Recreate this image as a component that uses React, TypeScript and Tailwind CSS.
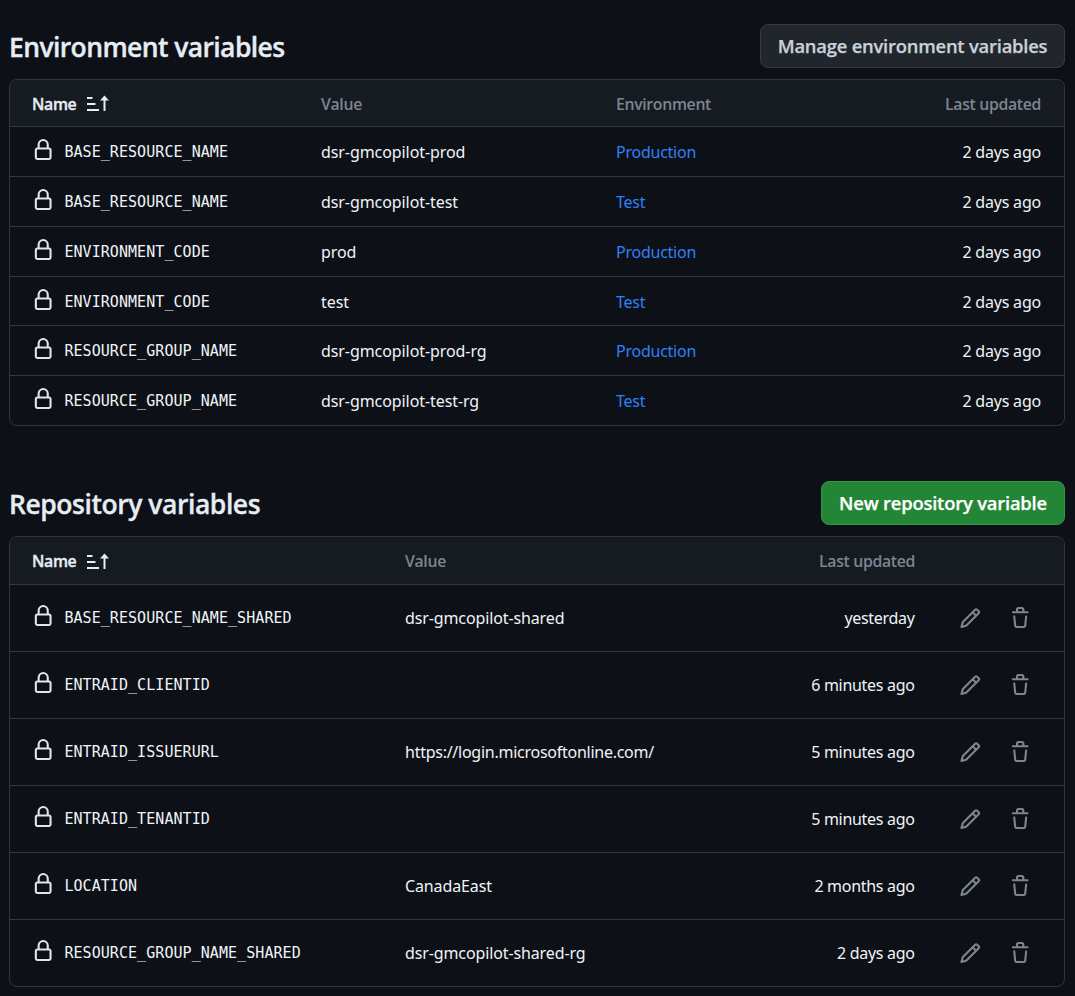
import { type ReactNode } from "react";

type EnvironmentVariable = { name: string; value: string; environment: string; height: string };
type RepositoryVariable = { name: string; value: string; updated: string; height: string };

const environmentVariables: EnvironmentVariable[] = [
  { name: "BASE_RESOURCE_NAME", value: "dsr-gmcopilot-prod", environment: "Production", height: "h-[50px]" },
  { name: "BASE_RESOURCE_NAME", value: "dsr-gmcopilot-test", environment: "Test", height: "h-[50px]" },
  { name: "ENVIRONMENT_CODE", value: "prod", environment: "Production", height: "h-[50px]" },
  { name: "ENVIRONMENT_CODE", value: "test", environment: "Test", height: "h-[49px] pt-px" },
  { name: "RESOURCE_GROUP_NAME", value: "dsr-gmcopilot-prod-rg", environment: "Production", height: "h-[50px]" },
  { name: "RESOURCE_GROUP_NAME", value: "dsr-gmcopilot-test-rg", environment: "Test", height: "h-[49px]" },
];

const repositoryVariables: RepositoryVariable[] = [
  { name: "BASE_RESOURCE_NAME_SHARED", value: "dsr-gmcopilot-shared", updated: "yesterday", height: "h-[67px]" },
  { name: "ENTRAID_CLIENTID", value: "", updated: "6 minutes ago", height: "h-[67px]" },
  { name: "ENTRAID_ISSUERURL", value: "https://login.microsoftonline.com/", updated: "5 minutes ago", height: "h-[67px]" },
  { name: "ENTRAID_TENANTID", value: "", updated: "5 minutes ago", height: "h-[67px]" },
  { name: "LOCATION", value: "CanadaEast", updated: "2 months ago", height: "h-[67px]" },
  { name: "RESOURCE_GROUP_NAME_SHARED", value: "dsr-gmcopilot-shared-rg", updated: "2 days ago", height: "h-[66px]" },
];

function Glyph({ d, className }: { d: string; className: string }) {
  return (
    <svg viewBox="0 0 16 16" fill="currentColor" aria-hidden="true" className={`h-[22.4px] w-[22.4px] shrink-0 ${className}`}>
      <path d={d} />
    </svg>
  );
}

const LOCK =
  "M4 4a4 4 0 0 1 8 0v2h.25c.966 0 1.75.784 1.75 1.75v5.5A1.75 1.75 0 0 1 12.25 15h-8.5A1.75 1.75 0 0 1 2 13.25v-5.5C2 6.784 2.784 6 3.75 6H4Zm8.25 3.5h-8.5a.25.25 0 0 0-.25.25v5.5c0 .138.112.25.25.25h8.5a.25.25 0 0 0 .25-.25v-5.5a.25.25 0 0 0-.25-.25ZM10.5 6V4a2.5 2.5 0 1 0-5 0v2Z";
const PENCIL =
  "M11.013 1.427a1.75 1.75 0 0 1 2.474 0l1.086 1.086a1.75 1.75 0 0 1 0 2.474l-8.61 8.61c-.21.21-.47.364-.756.445l-3.251.93a.75.75 0 0 1-.927-.928l.929-3.25c.081-.286.235-.547.445-.758l8.61-8.61Zm.176 4.823L9.75 4.81l-6.286 6.287a.253.253 0 0 0-.064.108l-.558 1.953 1.953-.558a.253.253 0 0 0 .108-.064Zm1.238-3.763a.25.25 0 0 0-.354 0L10.811 3.75l1.439 1.44 1.263-1.263a.25.25 0 0 0 0-.354Z";
const TRASH =
  "M11 1.75V3h2.25a.75.75 0 0 1 0 1.5H2.75a.75.75 0 0 1 0-1.5H5V1.75C5 .784 5.784 0 6.75 0h2.5C10.216 0 11 .784 11 1.75ZM4.496 6.675l.66 6.6a.25.25 0 0 0 .249.225h5.19a.25.25 0 0 0 .249-.225l.66-6.6a.75.75 0 0 1 1.492.149l-.66 6.6A1.748 1.748 0 0 1 10.595 15h-5.19a1.75 1.75 0 0 1-1.741-1.575l-.66-6.6a.75.75 0 1 1 1.492-.15ZM6.5 1.75V3h3V1.75a.25.25 0 0 0-.25-.25h-2.5a.25.25 0 0 0-.25.25Z";

function SortIcon() {
  return (
    <svg viewBox="0 0 24 18" fill="none" stroke="currentColor" strokeWidth="2" aria-hidden="true" className="mb-[3px] h-[18px] w-6">
      <path d="M1 4h5.5M1 10h8.5M1 16h12" />
      <path d="M18.5 17V4" />
      <path d="M18.5 1.5 23 6.6h-9Z" fill="currentColor" stroke="none" />
    </svg>
  );
}

function SectionTitle({ title, tracking, children }: { title: string; tracking: string; children: ReactNode }) {
  return (
    <div className="flex h-11 items-center justify-between">
      <h2
        className={`pt-px font-['Open_Sans',sans-serif] text-[26.5px] leading-9 font-semibold text-[#e6edf3] [-webkit-text-stroke:0.35px_currentColor] ${tracking}`}
      >
        {title}
      </h2>
      {children}
    </div>
  );
}

function NameHeader({ width }: { width: string }) {
  return (
    <div className={`flex items-center text-[#e6edf3] ${width}`}>
      <span className="w-[54px] [-webkit-text-stroke:0.35px_currentColor]">Name</span>
      <SortIcon />
    </div>
  );
}

function NameCell({ name, width, offset }: { name: string; width: string; offset: string }) {
  return (
    <div className={`flex items-center ${width}`}>
      <Glyph d={LOCK} className="mb-[3px] text-[#dfe6ed]" />
      <span className={`ml-[10px] font-['DejaVu_Sans_Mono',monospace] text-[15px] tracking-[0.06px] ${offset}`}>{name}</span>
    </div>
  );
}

const buttonClass =
  "flex h-11 items-center justify-center rounded-lg border font-['Open_Sans',sans-serif] text-[18.4px] font-semibold whitespace-nowrap [-webkit-text-stroke:0.25px_currentColor]";
const headerClass =
  "flex items-center border-b border-[#30363d] bg-[#161b22] pl-[22px] font-['Open_Sans',sans-serif] text-[15.8px] font-semibold tracking-[-0.33px] text-[#7d8590]";
const rowClass = "flex items-center border-b border-[#30363d] pl-[22px] last:border-b-0";
const tableClass = "overflow-hidden rounded-lg border border-[#30363d]";

export default function App() {
  return (
    <main className="h-[996px] overflow-hidden bg-[#0d1017] px-[10px] pt-6 pl-[9px] font-['Noto_Sans',sans-serif] text-[16px] text-[#f0f4f8]">
      <section>
        <SectionTitle title="Environment variables" tracking="tracking-[-0.6px]">
          <button className={`w-[305px] border-[#363b42] bg-[#21262d] tracking-[-0.22px] text-[#c9d1d9] ${buttonClass}`}>
            Manage environment variables
          </button>
        </SectionTitle>
        <div className={`mt-[11px] ${tableClass}`}>
          <div className={`h-[47px] pt-[3px] ${headerClass}`}>
            <NameHeader width="w-[289px]" />
            <span className="w-[295px]">Value</span>
            <span>Environment</span>
            <span className="ml-auto pr-[23px]">Last updated</span>
          </div>
          {environmentVariables.map((v) => (
            <div key={v.name + v.environment} className={`${rowClass} ${v.height}`}>
              <NameCell name={v.name} width="w-[289px]" offset="pt-[2px]" />
              <span className="w-[295px] tracking-[-0.08px]">{v.value}</span>
              <a className="tracking-[-0.25px] text-[#2f81f7]">{v.environment}</a>
              <span className="ml-auto pr-[23px] tracking-[-0.2px]">2 days ago</span>
            </div>
          ))}
        </div>
      </section>

      <section className="mt-[55px]">
        <SectionTitle title="Repository variables" tracking="tracking-[-0.45px]">
          <button className={`w-[244px] border-[#369446] bg-[#238636] tracking-[-0.2px] text-white ${buttonClass}`}>
            New repository variable
          </button>
        </SectionTitle>
        <div className={`mt-[11px] ${tableClass}`}>
          <div className={`h-12 pt-[3px] ${headerClass}`}>
            <NameHeader width="w-[373px]" />
            <span>Value</span>
            <span className="mr-[149px] ml-auto">Last updated</span>
          </div>
          {repositoryVariables.map((v) => (
            <div key={v.name} className={`${rowClass} ${v.height}`}>
              <NameCell name={v.name} width="w-[373px]" offset="" />
              <span className={v.value.startsWith("https") ? "tracking-[-0.26px]" : "tracking-[-0.12px]"}>{v.value}</span>
              <span className="ml-auto tracking-[-0.3px]">{v.updated}</span>
              <button aria-label="Edit variable" className="ml-[44px] text-[#7d8590]">
                <Glyph d={PENCIL} className="" />
              </button>
              <button aria-label="Delete variable" className="mr-[33px] ml-[27.6px] text-[#7d8590]">
                <Glyph d={TRASH} className="" />
              </button>
            </div>
          ))}
        </div>
      </section>
    </main>
  );
}
